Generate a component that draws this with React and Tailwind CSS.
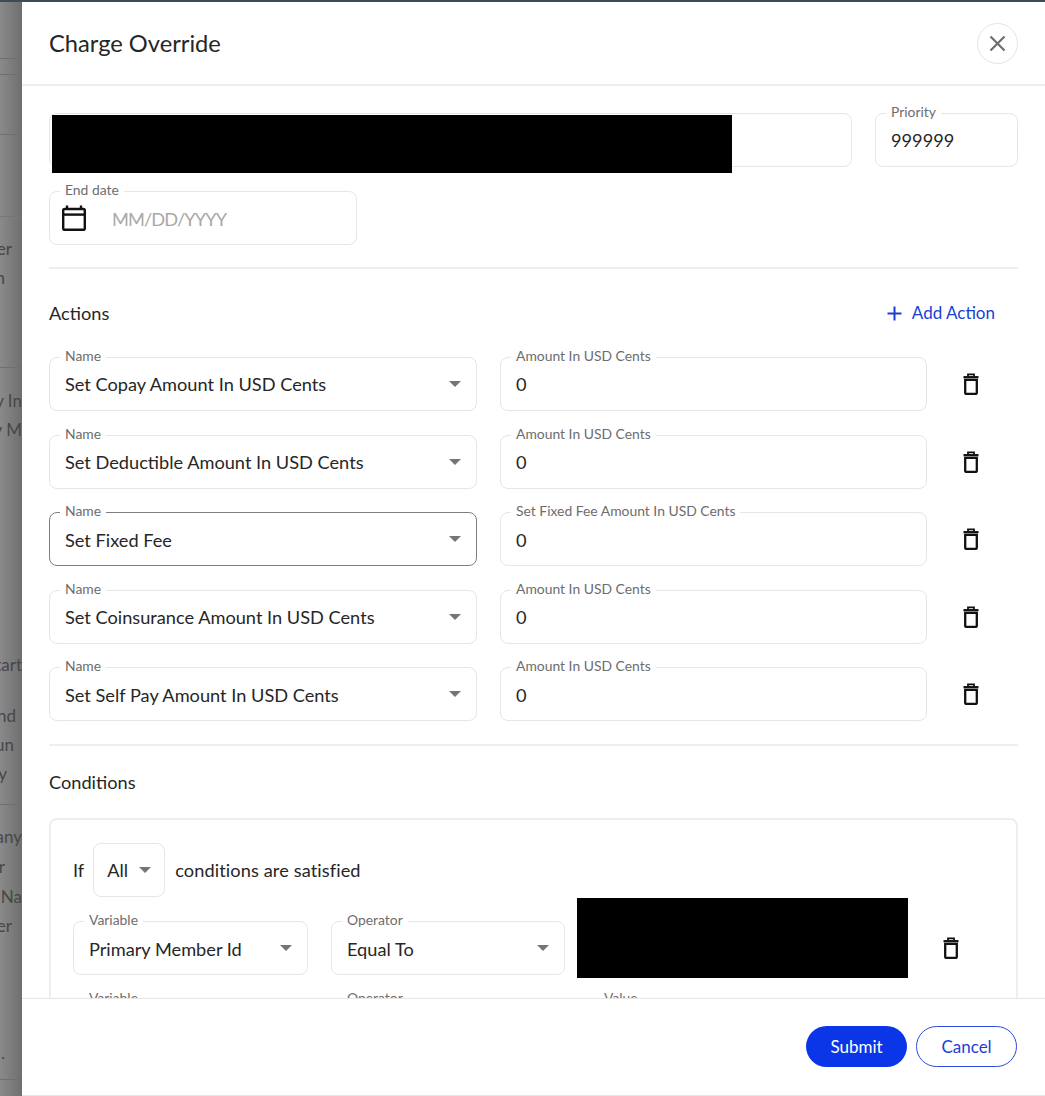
import React from "react";

const actions = [
  { name: "Set Copay Amount In USD Cents", label: "Amount In USD Cents" },
  { name: "Set Deductible Amount In USD Cents", label: "Amount In USD Cents" },
  { name: "Set Fixed Fee", label: "Set Fixed Fee Amount In USD Cents", focused: true },
  { name: "Set Coinsurance Amount In USD Cents", label: "Amount In USD Cents" },
  { name: "Set Self Pay Amount In USD Cents", label: "Amount In USD Cents" },
];

// strips of the page behind the dialog, top to bottom
const backdropRows = [
  { c: "h-[57px] border-b border-[#6f6f6f]" },
  { c: "h-[16px] border-b border-[#6f6f6f]" },
  { c: "h-[60px] border-b border-[#6f6f6f]" },
  { c: "h-[82px] border-b border-[#767676]" },
  { c: "h-[17px]" },
  { c: "h-[29px] pr-[10px]", text: "er" },
  { c: "h-[29px] pr-[17px]", text: "n" },
  { c: "h-[76px] border-b border-[#6f6f6f]" },
  { c: "h-[18px]" },
  { c: "h-[29px]", text: "y In" },
  { c: "h-[29px]", text: "y M" },
  { c: "h-[207px]" },
  { c: "h-[28px]", text: "tart" },
  { c: "h-[22px]" },
  { c: "h-[29px] pr-[6px]", text: "nd" },
  { c: "h-[29px] pr-[8px]", text: "un" },
  { c: "h-[29px] pr-[15px]", text: "y" },
  { c: "h-[17px] border-b border-[#6f6f6f]" },
  { c: "h-[17px]" },
  { c: "h-[30px]", text: "any" },
  { c: "h-[30px] pr-[17px]", text: "r" },
  { c: "h-[29px]", text: "Na" },
  { c: "h-[30px] pr-[10px]", text: "er" },
  { c: "h-[97px]" },
  { c: "h-[29px] pr-[17px]", text: "." },
  { c: "h-[13px] border-b border-[#6f6f6f]" },
];

const Trash = () => (
  <svg width="16" height="22" viewBox="0 0 16 22" fill="none" stroke="#111" strokeWidth="2.3">
    <path d="M0.5 4.2h15" />
    <path d="M5 3.6V1.4h6v2.2" strokeWidth="1.8" />
    <path d="M2.2 6.8h11.6v13a1.2 1.2 0 0 1-1.2 1.2H3.4a1.2 1.2 0 0 1-1.2-1.2z" />
  </svg>
);

const Calendar = () => (
  <svg width="24" height="26" viewBox="0 0 24 26" fill="none" stroke="#111" strokeWidth="2.4">
    <rect x="1.2" y="4" width="21.6" height="20.8" rx="1.6" />
    <path d="M1.2 9.6h21.6" />
    <path d="M5 0.5v4.5M19 0.5v4.5" />
  </svg>
);

const Caret = () => (
  <span className="h-0 w-0 border-x-[6px] border-t-[6px] border-x-transparent border-t-[#757575]" />
);

const Field = ({ label, value, select, focused, className = "" }) => (
  <div
    className={`relative flex h-[54px] items-center rounded-lg border bg-white px-[15px] text-[18.2px] text-[#262626] ${
      focused ? "border-[#7f7f7f]" : "border-[#e6e6e6]"
    } ${className}`}
  >
    {label && (
      <span className="absolute -top-[10px] left-[10px] bg-white px-[5px] text-[13.9px] leading-[16px] whitespace-nowrap text-[#6d6d6d]">
        {label}
      </span>
    )}
    <span className="flex-1 pt-[2px] whitespace-nowrap">{value}</span>
    {select && <Caret />}
  </div>
);

export default function App() {
  return (
    <div className="flex h-[1096px] w-[1045px] flex-col overflow-hidden bg-white font-[Lato,sans-serif]">
      <div className="h-[2px] bg-[#3d4a57]" />
      <div className="flex min-h-0 flex-1">
        <div className="flex w-[22px] shrink-0 flex-col overflow-hidden bg-gradient-to-r from-[#8a8a8a] to-[#6f6f6f] text-[17px] text-[#474747]">
          {backdropRows.map((r, i) => (
            <div key={i} className={`${r.c} flex shrink-0 items-center justify-end whitespace-nowrap`}>
              {r.text}
            </div>
          ))}
        </div>

        <div className="flex min-w-0 flex-1 flex-col">
          <div className="flex h-[84px] shrink-0 items-center justify-between border-b-2 border-[#eeeeee] px-[27px]">
            <h1 className="pt-[2px] text-[23.7px] text-[#262626]">Charge Override</h1>
            <button className="flex h-[41px] w-[41px] items-center justify-center rounded-full border border-[#e4e4e4]">
              <svg width="17" height="17" viewBox="0 0 17 17" stroke="#6e6e6e" strokeWidth="2.2">
                <path d="M1.5 1.5l14 14M15.5 1.5l-14 14" />
              </svg>
            </button>
          </div>

          <div className="min-h-0 flex-1 overflow-hidden px-[27px] pt-[27px]">
            <div className="flex gap-[23px]">
              <div className="relative flex-1">
                <Field label="" value="" />
                <div className="absolute top-[2px] left-[3px] h-[58px] w-[680px] bg-black" />
              </div>
              <Field label="Priority" value="999999" className="w-[143px]" />
            </div>

            <div className="relative mt-[24px] flex h-[54px] w-[308px] items-center rounded-lg border border-[#e6e6e6] pl-[12px] text-[18.2px]">
              <span className="absolute -top-[10px] left-[10px] bg-white px-[5px] text-[13.9px] leading-[16px] text-[#6d6d6d]">
                End date
              </span>
              <Calendar />
              <span className="ml-[26px] pt-[3px] tracking-[-0.9px] text-[#a8a8a8]">MM/DD/YYYY</span>
            </div>

            <div className="mt-[22px] border-t-2 border-[#eeeeee]" />

            <div className="mt-[29px] flex h-[30px] items-center justify-between pr-[23px]">
              <h2 className="pt-[2px] text-[18.2px] text-[#262626]">Actions</h2>
              <button className="flex items-center gap-[10px] text-[17px] text-[#1a3fd6]">
                <svg width="15" height="15" viewBox="0 0 15 15" stroke="#1a3fd6" strokeWidth="2">
                  <path d="M7.5 0.5v14M0.5 7.5h14" />
                </svg>
                Add Action
              </button>
            </div>

            <div className="mt-[29px] flex flex-col gap-[23.6px]">
              {actions.map((a) => (
                <div key={a.name} className="flex items-center">
                  <Field label="Name" value={a.name} select focused={a.focused} className="w-[428px]" />
                  <Field label={a.label} value="0" className="ml-[23px] w-[427px]" />
                  <div className="ml-[36px]">
                    <Trash />
                  </div>
                </div>
              ))}
            </div>

            <div className="mt-[23px] border-t-2 border-[#eeeeee]" />

            <h2 className="mt-[23px] text-[18.2px] leading-[26px] text-[#262626]">Conditions</h2>

            <div className="mt-[23px] rounded-lg border-2 border-[#eeeeee] px-[22px] pt-[23px]">
              <div className="flex items-center text-[18.2px] text-[#262626]">
                <span>If</span>
                <div className="ml-[9px] flex h-[54px] w-[72px] items-center justify-center gap-[11px] rounded-lg border border-[#e6e6e6]">
                  All
                  <Caret />
                </div>
                <span className="ml-[10px] tracking-[0.1px]">conditions are satisfied</span>
              </div>

              <div className="mt-[24px] flex flex-col gap-[24px]">
                {[0, 1].map((i) => (
                  <div key={i} className="flex items-center">
                    <Field label="Variable" value={i === 0 ? "Primary Member Id" : ""} select className="w-[235px]" />
                    <Field label="Operator" value={i === 0 ? "Equal To" : ""} select className="ml-[23px] w-[234px]" />
                    <div className="relative ml-[23px] w-[320px]">
                      <Field label="Value" value="" />
                      {i === 0 && (
                        <div className="absolute -top-[23px] -left-[11px] h-[80px] w-[331px] bg-black" />
                      )}
                    </div>
                    <div className="ml-[35px]">
                      <Trash />
                    </div>
                  </div>
                ))}
              </div>
            </div>
          </div>

          <div className="flex h-[98px] shrink-0 items-center justify-end gap-[9px] border-y border-[#e6e6e6] bg-white pr-[28px] pb-[2px]">
            <button className="h-[41px] w-[101px] rounded-full bg-[#0b36e8] pt-[2px] text-[17px] text-white">Submit</button>
            <button className="h-[41px] w-[101px] rounded-full border-[1.5px] border-[#2a4bd8] pt-[2px] text-[17px] text-[#1a3fd6]">
              Cancel
            </button>
          </div>
        </div>
      </div>
    </div>
  );
}
